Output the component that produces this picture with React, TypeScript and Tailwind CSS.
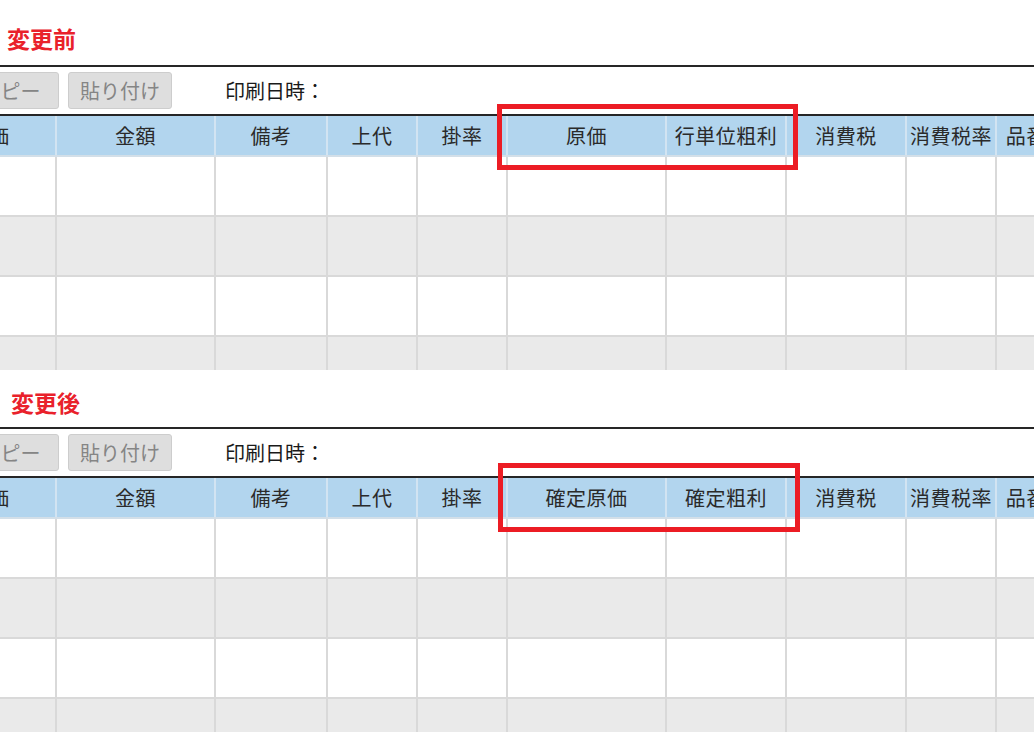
import React from "react";

type Col = { label: string; w: number };

const baseCols: Col[] = [
  { label: "単価", w: 134 },
  { label: "金額", w: 159 },
  { label: "備考", w: 112 },
  { label: "上代", w: 90 },
  { label: "掛率", w: 90 },
  { label: "原価", w: 159 },
  { label: "行単位粗利", w: 120 },
  { label: "消費税", w: 120 },
  { label: "消費税率", w: 90 },
  { label: "品番コード", w: 122 },
];

const afterCols: Col[] = baseCols.map((c) =>
  c.label === "原価" ? { ...c, label: "確定原価" } : c.label === "行単位粗利" ? { ...c, label: "確定粗利" } : c
);

function Section({
  title,
  cols,
  titleClass,
  boxClass,
}: {
  title: string;
  cols: Col[];
  titleClass: string;
  boxClass: string;
}) {
  const rows = [0, 1, 2, 3, 4];
  return (
    <section className="relative">
      <div className={titleClass}>
        <h2 className="text-[23px] leading-[24px] font-bold text-[#e9212b]">{title}</h2>
      </div>

      <div className="h-[305px] overflow-hidden border-t-2 border-[#262626]">
        {/* toolbar */}
        <div className="flex h-[49px] items-center border-b-2 border-[#262626]">
          <div className="ml-[-38px] flex items-center gap-[9px]">
            <button
              type="button"
              className="flex h-[37px] w-[97px] items-center justify-center rounded-[3px] border border-[#cdcdcd] bg-[#dedede] text-[20px] text-[#858585]"
            >
              コピー
            </button>
            <button
              type="button"
              className="flex h-[37px] w-[104px] items-center justify-center rounded-[3px] border border-[#cdcdcd] bg-[#dedede] text-[20px] text-[#858585]"
            >
              貼り付け
            </button>
          </div>
          <span className="ml-[53px] text-[20px] text-[#1a1a1a]">印刷日時：</span>
        </div>

        {/* grid */}
        <div className="ml-[-77px] w-max">
          <div className="flex h-[41px] border-b-2 border-[#d3dfe8] bg-[#b2d5ee]">
            {cols.map((c) => (
              <div
                key={c.label}
                style={{ width: c.w }}
                className="flex shrink-0 items-center justify-center whitespace-nowrap border-r-2 border-[#d2e4f2] text-[20px] tracking-[0.5px] text-[#2a2a2a]"
              >
                {c.label}
              </div>
            ))}
          </div>
          {rows.map((r) => (
            <div
              key={r}
              className={`flex h-[60px] border-b-2 border-[#d9d9d9] ${r % 2 === 1 ? "bg-[#eaeaea]" : "bg-white"}`}
            >
              {cols.map((c) => (
                <div key={c.label} style={{ width: c.w }} className="shrink-0 border-r-2 border-[#d9d9d9]" />
              ))}
            </div>
          ))}
        </div>
      </div>

      <div className={`pointer-events-none absolute border-[5px] border-[#ec1c24] ${boxClass}`} />
    </section>
  );
}

export default function App() {
  return (
    <div
      className="h-[733px] w-[1034px] overflow-hidden bg-white"
      style={{ fontFamily: '"Noto Sans CJK JP", "Noto Sans", sans-serif' }}
    >
      <Section
        title="変更前"
        cols={baseCols}
        titleClass="flex h-[65px] items-end pb-[15px] pl-[7px]"
        boxClass="left-[497px] top-[104px] h-[66px] w-[301px]"
      />
      <Section
        title="変更後"
        cols={afterCols}
        titleClass="flex h-[57px] items-end pb-[13px] pl-[11px]"
        boxClass="left-[498px] top-[93px] h-[69px] w-[302px]"
      />
    </div>
  );
}
